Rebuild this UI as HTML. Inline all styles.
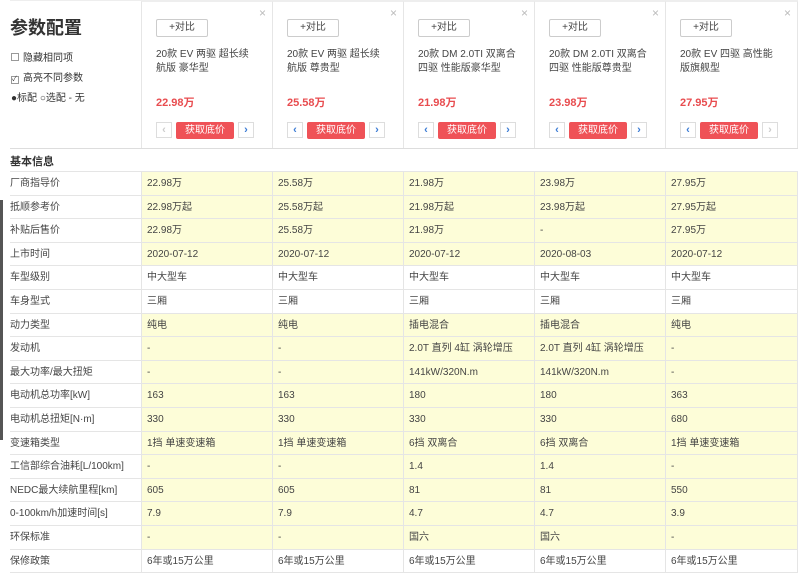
<!DOCTYPE html>
<html><head><meta charset="utf-8"><style>
*{margin:0;padding:0;box-sizing:border-box}
body{width:800px;height:573px;overflow:hidden;background:#fff;font-family:"Liberation Sans","Noto Sans CJK SC",sans-serif;color:#333;position:relative;font-size:10px}
.a{position:absolute}
.card{position:absolute;top:1px;height:148px;width:131px;border-left:1px solid #e6e6e6;border-top:1px solid #eee}
.btn{position:absolute;left:14px;top:17px;width:52px;height:18px;border:1px solid #ccc;border-radius:2px;font-size:10px;text-align:center;line-height:16px;color:#444}
.x{position:absolute;right:6px;top:4px;color:#bbb;font-size:12px}
.name{position:absolute;left:14px;top:46px;width:100px;font-size:10px;line-height:14px;color:#444}
.pr{position:absolute;left:14px;top:92px;color:#e84c4f;font-weight:bold;font-size:11px}
.nav{position:absolute;top:120px;width:16px;height:16px;border:1px solid #ddd;color:#3a7bd5;text-align:center;line-height:14px;font-size:11px;font-weight:bold}
.get{position:absolute;left:34px;top:120px;width:58px;height:17px;background:#ef5257;color:#fff;border-radius:2px;text-align:center;line-height:17px;font-size:10px}
.row{position:absolute;left:10px;width:788px;height:23.6px;border-bottom:1px solid #e5e5e5}
.c{position:absolute;top:0;height:100%;line-height:23px;font-size:10px;padding-left:5px;border-left:1px solid #e5e5e5;width:131px;color:#444}
.y .c{background:#fdfdd8}
.l{position:absolute;left:0;top:0;line-height:23px;font-size:10px;color:#444}
</style></head><body>
<div class="a" style="left:10px;top:0;width:788px;height:1px;background:#eee"></div>
<div class="a" style="left:10px;top:14px;font-size:18px;font-weight:bold;color:#333">参数配置</div>
<div class="a" style="left:11px;top:49px;font-size:10px"><span style="display:inline-block;width:8px;height:8px;border:1px solid #999;margin-right:4px"></span>隐藏相同项</div>
<div class="a" style="left:11px;top:69px;font-size:10px"><span style="display:inline-block;width:8px;height:8px;border:1px solid #999;margin-right:4px;font-size:7px;line-height:6px">✓</span>高亮不同参数</div>
<div class="a" style="left:11px;top:89px;font-size:10px">●标配 ○选配 - 无</div>

<div class="card" style="left:141px"><div class="x">×</div><div class="btn">+对比</div><div class="name">20款 EV 两驱 超长续航版 豪华型</div><div class="pr">22.98万</div><div class="nav" style="left:14px;color:#ccc">‹</div><div class="get">获取底价</div><div class="nav" style="left:96px">›</div></div>
<div class="card" style="left:272px"><div class="x">×</div><div class="btn">+对比</div><div class="name">20款 EV 两驱 超长续航版 尊贵型</div><div class="pr">25.58万</div><div class="nav" style="left:14px">‹</div><div class="get">获取底价</div><div class="nav" style="left:96px">›</div></div>
<div class="card" style="left:403px"><div class="x">×</div><div class="btn">+对比</div><div class="name">20款 DM 2.0TI 双离合四驱 性能版豪华型</div><div class="pr">21.98万</div><div class="nav" style="left:14px">‹</div><div class="get">获取底价</div><div class="nav" style="left:96px">›</div></div>
<div class="card" style="left:534px"><div class="x">×</div><div class="btn">+对比</div><div class="name">20款 DM 2.0TI 双离合四驱 性能版尊贵型</div><div class="pr">23.98万</div><div class="nav" style="left:14px">‹</div><div class="get">获取底价</div><div class="nav" style="left:96px">›</div></div>
<div class="card" style="left:665px;border-right:1px solid #e6e6e6;width:133px"><div class="x">×</div><div class="btn">+对比</div><div class="name">20款 EV 四驱 高性能版旗舰型</div><div class="pr">27.95万</div><div class="nav" style="left:14px">‹</div><div class="get">获取底价</div><div class="nav" style="left:96px;color:#ccc">›</div></div>
<div class="a" style="left:10px;top:148px;width:788px;height:1px;background:#ddd"></div>
<div class="a" style="left:10px;top:153px;font-size:11px;font-weight:bold">基本信息</div>
<div class="a" style="left:10px;top:171px;width:788px;height:1px;background:#e5e5e5"></div>
<div class="a" style="left:0;top:200px;width:3px;height:240px;background:#555"></div>
<div id="t"></div>
<script>
var d=[["厂商指导价",1,"22.98万","25.58万","21.98万","23.98万","27.95万"],
["抵顺参考价",1,"22.98万起","25.58万起","21.98万起","23.98万起","27.95万起"],
["补贴后售价",1,"22.98万","25.58万","21.98万","-","27.95万"],
["上市时间",1,"2020-07-12","2020-07-12","2020-07-12","2020-08-03","2020-07-12"],
["车型级别",0,"中大型车","中大型车","中大型车","中大型车","中大型车"],
["车身型式",0,"三厢","三厢","三厢","三厢","三厢"],
["动力类型",1,"纯电","纯电","插电混合","插电混合","纯电"],
["发动机",1,"-","-","2.0T 直列 4缸 涡轮增压","2.0T 直列 4缸 涡轮增压","-"],
["最大功率/最大扭矩",1,"-","-","141kW/320N.m","141kW/320N.m","-"],
["电动机总功率[kW]",1,"163","163","180","180","363"],
["电动机总扭矩[N·m]",1,"330","330","330","330","680"],
["变速箱类型",1,"1挡 单速变速箱","1挡 单速变速箱","6挡 双离合","6挡 双离合","1挡 单速变速箱"],
["工信部综合油耗[L/100km]",1,"-","-","1.4","1.4","-"],
["NEDC最大续航里程[km]",1,"605","605","81","81","550"],
["0-100km/h加速时间[s]",1,"7.9","7.9","4.7","4.7","3.9"],
["环保标准",1,"-","-","国六","国六","-"],
["保修政策",0,"6年或15万公里","6年或15万公里","6年或15万公里","6年或15万公里","6年或15万公里"]];
var h="";d.forEach(function(r,i){h+='<div class="row'+(r[1]?' y':'')+'" style="top:'+(172+i*23.6)+'px"><div class="l">'+r[0]+'</div>';
for(var j=0;j<5;j++)h+='<div class="c" style="left:'+(131+j*131)+'px;'+(j==4?'width:133px;border-right:1px solid #e5e5e5':'')+'">'+r[j+2]+'</div>';h+='</div>';});
document.getElementById("t").innerHTML=h;
</script>
</body></html>
